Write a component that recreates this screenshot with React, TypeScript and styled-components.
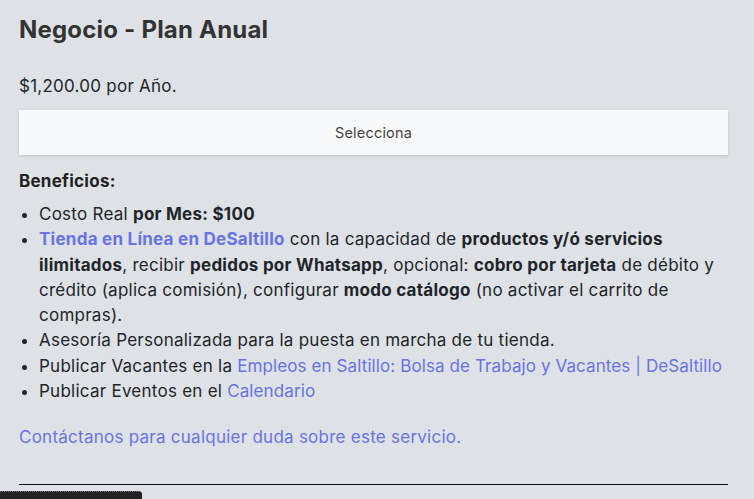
import React from 'react';
import styled, { createGlobalStyle } from 'styled-components';

const GlobalStyle = createGlobalStyle`
  html, body {
    margin: 0;
    padding: 0;
    background: #dee2e6;
  }
  body {
    font-family: Inter, "Noto Sans", sans-serif;
    color: #212529;
  }
`;

const App = function App() {
  return (
    <>
      <GlobalStyle />
      <Page>
        <Title>Negocio - Plan Anual</Title>
        <Price>$1,200.00 por Año.</Price>
        <SelectButton type="button">Selecciona</SelectButton>
        <Heading>Beneficios:</Heading>
        <Benefits>
          <li>
            Costo Real <b>por Mes: $100</b>
          </li>
          <li>
            <StrongLink href="#">Tienda en Línea en DeSaltillo</StrongLink> con la capacidad de{' '}
            <b>productos y/ó servicios ilimitados</b>, recibir <b>pedidos por Whatsapp</b>, opcional:{' '}
            <b>cobro por tarjeta</b> de débito y crédito (aplica comisión), configurar{' '}
            <b>modo catálogo</b> (no activar el carrito de compras).
          </li>
          <li>Asesoría Personalizada para la puesta en marcha de tu tienda.</li>
          <li>
            Publicar Vacantes en la{' '}
            <Link href="#">Empleos en Saltillo: Bolsa de Trabajo y Vacantes | DeSaltillo</Link>
          </li>
          <li>
            Publicar Eventos en el <Link href="#">Calendario</Link>
          </li>
        </Benefits>
        <Contact href="#">Contáctanos para cualquier duda sobre este servicio.</Contact>
        <Rule />
      </Page>
      <StatusTip />
    </>
  );
};

const Page = styled.div`
  padding: 15px 26px 0 19px;
  display: flex;
  flex-direction: column;
  font-size: 17px;
  letter-spacing: 0.25px;
`;

const Title = styled.h1`
  margin: 0;
  font-size: 24px;
  font-weight: 700;
  line-height: 30px;
  letter-spacing: 0.2px;
  color: #333;
`;

const Price = styled.p`
  margin: 29px 0 12px;
  line-height: 24px;
`;

const SelectButton = styled.button`
  height: 45px;
  border: none;
  background: #f8f9fa;
  box-shadow: 0 1px 3px rgba(0, 0, 0, 0.15);
  font-family: inherit;
  font-size: 14.5px;
  letter-spacing: 0.2px;
  color: #444;
  cursor: pointer;
`;

const Heading = styled.p`
  margin: 14px 0 9px;
  font-weight: 700;
  line-height: 24px;
  color: #222;
`;

const Benefits = styled.ul`
  margin: 0;
  padding-left: 20px;
  line-height: 25.3px;

  b {
    font-weight: 700;
  }
`;

const Link = styled.a`
  color: #6772e5;
  text-decoration: none;
  letter-spacing: 0.1px;
`;

const StrongLink = styled(Link)`
  font-weight: 700;
  letter-spacing: 0.25px;
`;

const Contact = styled(Link)`
  margin-top: 21px;
  line-height: 24px;
  letter-spacing: 0.25px;
  align-self: flex-start;
`;

const Rule = styled.hr`
  margin: 35px 0 0;
  border: none;
  border-top: 1px solid #111;
`;

const StatusTip = styled.div`
  position: fixed;
  left: 0;
  bottom: 0;
  width: 142px;
  height: 7px;
  background: #222;
  border-top: 1px dotted #777;
  border-top-right-radius: 3px;
`;

export default App;
